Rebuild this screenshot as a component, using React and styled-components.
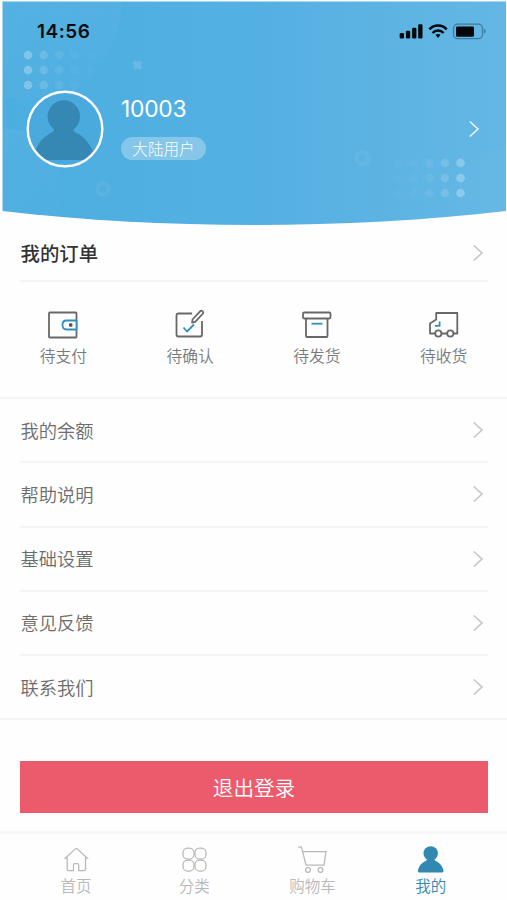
import React from "react";
import styled, { createGlobalStyle } from "styled-components";

const GlobalStyle = createGlobalStyle`
  *, *::before, *::after { box-sizing: border-box; }
  body {
    margin: 0;
    background: #fefefe;
    font-family: "Noto Sans CJK SC", sans-serif;
  }
  button { font: inherit; border: 0; padding: 0; background: none; }
`;

const Screen = styled.div`
  width: 507px;
  height: 900px;
  display: flex;
  flex-direction: column;
  overflow: hidden;
  background: #fefefe;
`;

const Header = styled.header`
  position: relative;
  height: 226px;
  flex: none;
`;

const Backdrop = styled.svg`
  position: absolute;
  inset: 0;
  width: 507px;
  height: 226px;
`;

const StatusBar = styled.div`
  position: relative;
  height: 62px;
  padding: 0 20px 0 37px;
  display: flex;
  align-items: center;
  justify-content: space-between;
`;

const Clock = styled.span`
  padding-top: 2px;
  font: 600 19px/24px Inter, sans-serif;
  letter-spacing: 0.5px;
  color: #080b0e;
`;

const Profile = styled.div`
  position: relative;
  height: 134px;
  padding: 0 27px 0 26px;
  display: flex;
  align-items: center;
`;

const Identity = styled.div`
  margin: 0 auto 0 17px;
  padding-bottom: 4px;
  display: flex;
  flex-direction: column;
  align-items: flex-start;
  gap: 13px;
`;

const UserName = styled.span`
  font: 400 22.8px/30px Inter, sans-serif;
  letter-spacing: -0.25px;
  color: #fff;
`;

const Badge = styled.span`
  width: 85px;
  height: 23px;
  border-radius: 12px;
  display: flex;
  align-items: center;
  justify-content: center;
  background: #85c6e9;
  color: #fff;
  font-size: 15.6px;
  font-weight: 300;
  line-height: 22px;
  padding-bottom: 2px;
`;

const Row = styled.div`
  height: ${(p) => p.$height || 64.25}px;
  margin: 0 ${(p) => (p.$full ? 0 : 19)}px 0 ${(p) => (p.$full ? 0 : 20)}px;
  padding: 0 ${(p) => (p.$full ? 23 : 4)}px 0 ${(p) => (p.$full ? 20.5 : 0.5)}px;
  border-bottom: 2px solid #f4f4f4;
  display: flex;
  align-items: center;
  justify-content: space-between;
  flex: none;
`;

const RowLabel = styled.span`
  font-size: ${(p) => (p.$strong ? 19.4 : 18.3)}px;
  font-weight: ${(p) => (p.$strong ? 500 : 350)};
  line-height: 28px;
  padding-bottom: 1px;
  color: ${(p) => (p.$strong ? "#333" : "#6c6c6c")};
`;

const Orders = styled.div`
  height: 117px;
  flex: none;
  padding-top: 25px;
  display: grid;
  grid-template-columns: repeat(4, 1fr);
  border-bottom: 2px solid #f4f4f4;
`;

const OrderItem = styled.div`
  display: flex;
  flex-direction: column;
  align-items: center;
  gap: 3px;
`;

const OrderLabel = styled.span`
  font-size: 15.8px;
  font-weight: 350;
  line-height: 24px;
  color: #777b7e;
`;

const Logout = styled.button`
  flex: none;
  height: 51.5px;
  margin: 41px 19px 0 20px;
  background: #eb5b6c;
  color: #fff;
  font-size: 20.6px;
  font-weight: 350;
  line-height: 50px;
`;

const TabBar = styled.nav`
  margin-top: auto;
  height: 69px;
  flex: none;
  padding: 9px 17px 0;
  border-top: 3px solid #f7f7f7;
  display: grid;
  grid-template-columns: repeat(4, 1fr);
`;

const Tab = styled.div`
  display: flex;
  flex-direction: column;
  align-items: center;
  color: ${(p) => (p.$active ? "#3188b3" : "#b8b8b8")};
`;

const TabLabel = styled.span`
  font-size: 15.5px;
  font-weight: 350;
  line-height: 22px;
`;

const dotAlpha = [0.27, 0.14, 0.07, 0.04, 0.02];

function Dots({ x, y, reverse }) {
  return dotAlpha.flatMap((alpha, column) =>
    [0, 15, 30].map((dy) => (
      <circle
        key={`${column}-${dy}`}
        cx={x + (reverse ? -1 : 1) * column * 15.6}
        cy={y + dy}
        r="4.3"
        fill="#fff"
        opacity={alpha}
      />
    ))
  );
}

function HeaderBackdrop() {
  return (
    <Backdrop viewBox="0 0 507 226" aria-hidden="true">
      <defs>
        <linearGradient id="sky" x1="0" x2="1">
          <stop offset="0" stopColor="#4caee0" />
          <stop offset="0.5" stopColor="#54b0e2" />
          <stop offset="1" stopColor="#64b7e4" />
        </linearGradient>
        <linearGradient id="glow" x1="0" y1="0" x2="1" y2="1">
          <stop offset="0" stopColor="#fff" stopOpacity="0.045" />
          <stop offset="1" stopColor="#fff" stopOpacity="0.005" />
        </linearGradient>
        <clipPath id="curve">
          <path d="M2.5 1.5H506V211C350 229.5 158 229.5 2.5 211Z" />
        </clipPath>
      </defs>
      <g clipPath="url(#curve)">
        <rect width="507" height="226" fill="url(#sky)" />
        <path d="M0 0H122C119 55 90 99 35 99H0Z" fill="url(#glow)" />
        <circle cx="6" cy="186" r="57" fill="url(#glow)" />
        <circle cx="506" cy="207" r="58" fill="#fff" opacity="0.015" />
        <path d="M134 61.5L141 68.5M141 61.5L134 68.5" stroke="#fff" strokeWidth="4.5" opacity="0.13" />
        <circle cx="103" cy="189" r="5.5" fill="none" stroke="#fff" strokeWidth="4" opacity="0.06" />
        <circle cx="362.5" cy="158" r="6" fill="none" stroke="#fff" strokeWidth="4" opacity="0.06" />
        <Dots x={28} y={55} />
        <Dots x={460.5} y={163} reverse />
      </g>
      <path d="M2.5 1.5H506" stroke="#a9d8f0" strokeWidth="1" />
    </Backdrop>
  );
}

function StatusIcons() {
  return (
    <svg width="88" height="18" viewBox="0 0 88 18">
      <g fill="#03080b">
        <rect x="0.7" y="11" width="4.3" height="5.5" rx="1.2" />
        <rect x="6.9" y="8.8" width="4.3" height="7.7" rx="1.2" />
        <rect x="13.1" y="5.8" width="4.3" height="10.7" rx="1.2" />
        <rect x="19.2" y="2.3" width="4.3" height="14.2" rx="1.2" />
        <path d="M36.5 12.8A4.4 4.4 0 0 1 41.6 12.8L39.05 16Z" />
        <rect x="57" y="4.5" width="18" height="10.3" rx="1.3" />
      </g>
      <g fill="none" stroke="#03080b" strokeWidth="2.5">
        <path d="M30.4 7.3C35.3 2.3 42.8 2.3 47.7 7.3" />
        <path d="M33.5 11C36.6 7.7 41.5 7.7 44.6 11" />
      </g>
      <rect x="54.5" y="2.2" width="29" height="14.5" rx="4.2" fill="none" stroke="#417b9d" strokeWidth="1.3" />
      <path d="M85 7C87.2 7.5 87.2 11 85 11.5Z" fill="#417b9d" />
    </svg>
  );
}

function Avatar() {
  return (
    <svg width="78" height="78" viewBox="0 0 78 78">
      <circle cx="39" cy="39" r="37.4" fill="#4aaadd" />
      <g fill="#3488b3">
        <circle cx="37.8" cy="26.4" r="16.2" />
        <path d="M28 39C29 41 26 42 23 44C15 49 11 55 9.5 62Q13 67 17 70H60Q64 67 67.5 62C64 55 60 49 53 44C49 42 46 41 48 38Z" />
      </g>
      <circle cx="39" cy="39" r="37.3" fill="none" stroke="#fff" strokeWidth="2.4" />
    </svg>
  );
}

function Chevron({ color = "#c5c5c5" }) {
  return (
    <svg width="12" height="18" viewBox="0 0 12 18" fill="none" stroke={color} strokeWidth="1.6">
      <path d="M1.8 1.5L10 9L1.8 16.5" />
    </svg>
  );
}

const orderIcons = {
  wallet: (
    <>
      <rect x="2" y="5" width="27.5" height="25" rx="0.8" />
      <g stroke="#3090bd">
        <path d="M29.5 13H19.5Q15.5 13 15.5 17.5T19.5 22H29.5Z" fill="#fefefe" />
      </g>
      <rect x="22" y="15.8" width="3.4" height="3.4" rx="1" fill="#555" stroke="none" />
    </>
  ),
  confirm: (
    <>
      <path d="M18 6H4.5Q2.5 6 2.5 8V27Q2.5 29 4.5 29H26Q28 29 28 27V13.5" />
      <path d="M18.5 12L26.3 3.6Q27.2 2.7 28.3 3.6L29 4.3Q29.7 5.2 29 6L21.2 14.4L18.1 15Z" />
      <path d="M9.5 20L13 24L20 17" stroke="#3090bd" />
    </>
  ),
  box: (
    <>
      <rect x="2" y="5" width="27.5" height="6" rx="1.2" />
      <path d="M5 11V28.5Q5 29.5 6 29.5H25.5Q26.5 29.5 26.5 28.5V11" />
      <path d="M10.5 16.2H21.5" stroke="#3090bd" />
    </>
  ),
  truck: (
    <>
      <path d="M7.2 26H2V16L8.2 12V5.5H29.3V26H25.5M19 26H13.5" />
      <circle cx="10.3" cy="26" r="3.1" />
      <circle cx="22.3" cy="26" r="3.1" />
      <path d="M11.6 14V18.4H6.9" stroke="#3090bd" />
    </>
  ),
};

const OrderIcon = ({ name }) => (
  <svg width="32" height="34" viewBox="0 0 32 34" fill="none" stroke="#686868" strokeWidth="1.8" strokeLinejoin="round">
    <g transform="translate(0 0.5)">{orderIcons[name]}</g>
  </svg>
);

const tabIcons = {
  home: (
    <path d="M3.3 15.2H5.2V26Q5.2 27.7 7 27.7H11.5V21.8Q11.5 20.6 12.7 20.6H15.5Q16.7 20.6 16.7 21.8V27.7H21.8Q23.5 27.7 23.5 26V15.2H25.3L15.5 6.1Q14.3 5.1 13.1 6.1Z" />
  ),
  grid: (
    <>
      <rect x="3" y="5" width="11" height="11" rx="4.5" />
      <rect x="15" y="5" width="11" height="11" rx="4.5" />
      <rect x="3" y="17" width="11" height="11" rx="4.5" />
      <rect x="15" y="17" width="11" height="11" rx="4.5" />
    </>
  ),
  cart: (
    <>
      <path d="M0.2 4.2H3.5L8 22.2H26L28 8.5H4.8" />
      <circle cx="10" cy="27" r="2.4" />
      <circle cx="22.5" cy="27" r="2.4" />
    </>
  ),
  user: (
    <g fill="currentColor" stroke="none">
      <circle cx="14.7" cy="10.4" r="7.2" />
      <path d="M11 16C11 19 5.5 17.5 2.3 26Q1.2 29.5 3.5 29.5H26Q28.2 29.5 27.1 26C23.9 17.5 18.4 19 18.4 16Z" />
    </g>
  ),
};

const TabIcon = ({ name }) => (
  <svg width="29" height="31" viewBox="0 0 29 31" fill="none" stroke="currentColor" strokeWidth="1.25" overflow="visible">
    {tabIcons[name]}
  </svg>
);

const orders = [
  ["wallet", "待支付"],
  ["confirm", "待确认"],
  ["box", "待发货"],
  ["truck", "待收货"],
];

const settings = ["我的余额", "帮助说明", "基础设置", "意见反馈", "联系我们"];

const tabs = [
  ["home", "首页"],
  ["grid", "分类"],
  ["cart", "购物车"],
  ["user", "我的"],
];

export default function App() {
  return (
    <Screen>
      <GlobalStyle />
      <Header>
        <HeaderBackdrop />
        <StatusBar>
          <Clock>14:56</Clock>
          <StatusIcons />
        </StatusBar>
        <Profile>
          <Avatar />
          <Identity>
            <UserName>10003</UserName>
            <Badge>大陆用户</Badge>
          </Identity>
          <Chevron color="#e7f5fd" />
        </Profile>
      </Header>
      <Row $height={56}>
        <RowLabel $strong>我的订单</RowLabel>
        <Chevron />
      </Row>
      <Orders>
        {orders.map(([icon, label]) => (
          <OrderItem key={label}>
            <OrderIcon name={icon} />
            <OrderLabel>{label}</OrderLabel>
          </OrderItem>
        ))}
      </Orders>
      {settings.map((label, i) => (
        <Row key={label} $full={i === settings.length - 1}>
          <RowLabel>{label}</RowLabel>
          <Chevron />
        </Row>
      ))}
      <Logout>退出登录</Logout>
      <TabBar>
        {tabs.map(([icon, label]) => (
          <Tab key={label} $active={icon === "user"}>
            <TabIcon name={icon} />
            <TabLabel>{label}</TabLabel>
          </Tab>
        ))}
      </TabBar>
    </Screen>
  );
}
